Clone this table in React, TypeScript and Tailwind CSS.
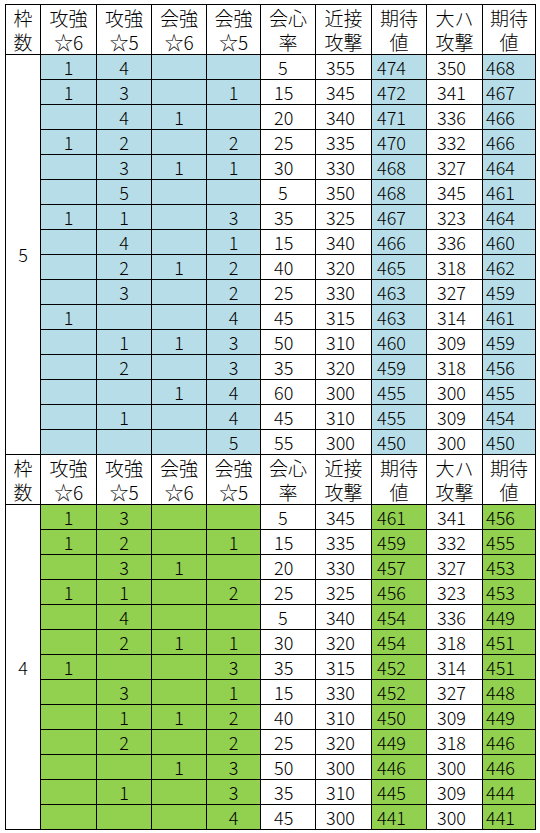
import React from "react"

type Row = (number | null)[]

const block5: Row[] = [
  [1, 4, null, null, 5, 355, 474, 350, 468],
  [1, 3, null, 1, 15, 345, 472, 341, 467],
  [null, 4, 1, null, 20, 340, 471, 336, 466],
  [1, 2, null, 2, 25, 335, 470, 332, 466],
  [null, 3, 1, 1, 30, 330, 468, 327, 464],
  [null, 5, null, null, 5, 350, 468, 345, 461],
  [1, 1, null, 3, 35, 325, 467, 323, 464],
  [null, 4, null, 1, 15, 340, 466, 336, 460],
  [null, 2, 1, 2, 40, 320, 465, 318, 462],
  [null, 3, null, 2, 25, 330, 463, 327, 459],
  [1, null, null, 4, 45, 315, 463, 314, 461],
  [null, 1, 1, 3, 50, 310, 460, 309, 459],
  [null, 2, null, 3, 35, 320, 459, 318, 456],
  [null, null, 1, 4, 60, 300, 455, 300, 455],
  [null, 1, null, 4, 45, 310, 455, 309, 454],
  [null, null, null, 5, 55, 300, 450, 300, 450],
]

const block4: Row[] = [
  [1, 3, null, null, 5, 345, 461, 341, 456],
  [1, 2, null, 1, 15, 335, 459, 332, 455],
  [null, 3, 1, null, 20, 330, 457, 327, 453],
  [1, 1, null, 2, 25, 325, 456, 323, 453],
  [null, 4, null, null, 5, 340, 454, 336, 449],
  [null, 2, 1, 1, 30, 320, 454, 318, 451],
  [1, null, null, 3, 35, 315, 452, 314, 451],
  [null, 3, null, 1, 15, 330, 452, 327, 448],
  [null, 1, 1, 2, 40, 310, 450, 309, 449],
  [null, 2, null, 2, 25, 320, 449, 318, 446],
  [null, null, 1, 3, 50, 300, 446, 300, 446],
  [null, 1, null, 3, 35, 310, 445, 309, 444],
  [null, null, null, 4, 45, 300, 441, 300, 441],
]

const headers = [
  ["枠", "数"],
  ["攻強", "☆6"],
  ["攻強", "☆5"],
  ["会強", "☆6"],
  ["会強", "☆5"],
  ["会心", "率"],
  ["近接", "攻撃"],
  ["期待", "値"],
  ["大ハ", "攻撃"],
  ["期待", "値"],
]

const widths = ["w-[35px]", "w-[56px]", "w-[55px]", "w-[55px]", "w-[54px]", "w-[55px]", "w-[56px]", "w-[55px]", "w-[56px]", "w-[53px]"]

// left padding of the left-aligned number columns (会心率 … 期待値)
const pads = ["pl-[13px]", "pl-[10px]", "pl-[5px]", "pl-[10px]", "pl-[3px]"]

function Header() {
  return (
    <tr className="h-[50px]">
      {headers.map(([a, b], i) => (
        <td key={i} className="border border-black p-0 text-center align-middle text-[19px] leading-[24px]">
          <div>{a}</div>
          <div>{b}</div>
        </td>
      ))}
    </tr>
  )
}

function Block({ slots, rows, tint }: { slots: number; rows: Row[]; tint: string }) {
  return (
    <>
      <Header />
      {rows.map((r, ri) => (
        <tr key={ri} className="h-[25px]">
          {ri === 0 && (
            <td rowSpan={rows.length} className="border border-black bg-white text-center align-middle">
              {slots}
            </td>
          )}
          {r.slice(0, 4).map((v, ci) => (
            <td key={ci} className={`border border-black text-center ${tint}`}>
              {v ?? ""}
            </td>
          ))}
          {r.slice(4).map((v, ci) => {
            const colored = ci === 2 || ci === 4
            const pad = ci === 0 && v !== null && v < 10 ? "pl-[17px]" : pads[ci]
            return (
              <td key={ci} className={`border border-black text-left ${pad} ${colored ? tint : "bg-white"}`}>
                {v}
              </td>
            )
          })}
        </tr>
      ))}
    </>
  )
}

export default function App() {
  return (
    <div className="min-h-screen bg-white pl-[5px] pt-[4px] font-['Noto_Sans_CJK_JP',sans-serif] font-light text-black">
      <table className="table-fixed border-collapse text-[18px] leading-[23px]">
        <colgroup>
          {widths.map((w, i) => (
            <col key={i} className={w} />
          ))}
        </colgroup>
        <tbody>
          <Block slots={5} rows={block5} tint="bg-[#b7dee8]" />
          <Block slots={4} rows={block4} tint="bg-[#92d050]" />
        </tbody>
      </table>
    </div>
  )
}
